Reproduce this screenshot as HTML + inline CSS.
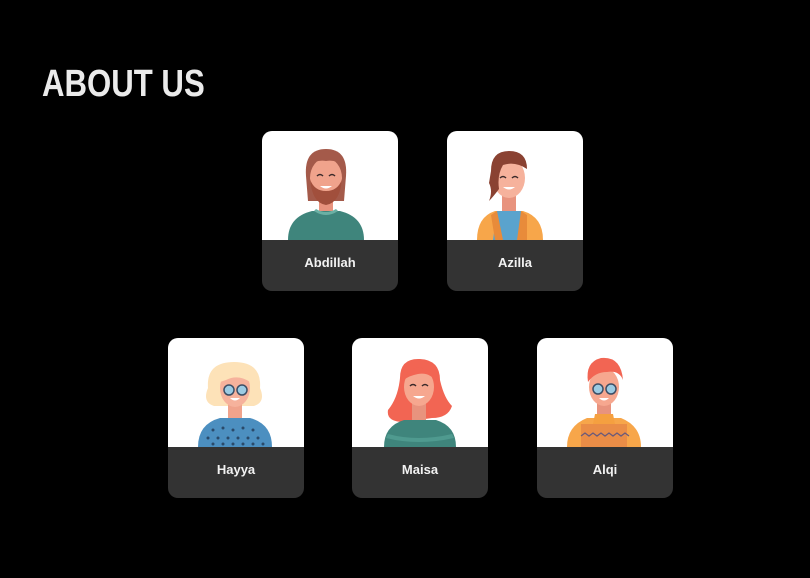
<!DOCTYPE html>
<html><head><meta charset="utf-8"><style>
body{margin:0;width:810px;height:578px;background:#000;position:relative;overflow:hidden;font-family:"Liberation Sans",sans-serif}
h1{position:absolute;left:42px;top:62px;margin:0;font-size:38px;line-height:44px;color:#ebebeb;font-weight:bold;transform:scaleX(0.82);transform-origin:left top;white-space:nowrap}
.card{position:absolute;width:136px;height:160px;border-radius:10px;overflow:hidden;background:#333}
.card svg{display:block;width:136px;height:109px;background:#fff}
.card div{height:51px;line-height:46px;text-align:center;color:#f2f2f2;font-weight:bold;font-size:13px}
</style></head><body>
<h1>ABOUT US</h1>

<div class="card" style="left:262px;top:131px">
<svg viewBox="0 0 136 109">
<path d="M44 45 Q42 18 64 18 Q86 18 84 45 L82 70 L46 70Z" fill="#a45a4a"/>
<rect x="57" y="60" width="14" height="24" fill="#e8937e"/>
<path d="M26 109 Q26 86 50 80 L78 80 Q102 86 102 109Z" fill="#3f857c"/>
<path d="M52 80 Q64 88 76 80 L74 78 Q64 84 54 78Z" fill="#6bb0a4"/>
<ellipse cx="64" cy="47" rx="16" ry="20" fill="#f0a38c"/>
<path d="M48 48 Q50 72 64 74 Q78 72 80 48 Q76 60 64 60 Q52 60 48 48Z" fill="#a14f3c"/>
<path d="M46 36 Q48 20 64 21 Q80 20 82 36 Q74 28 64 30 Q54 28 46 36Z" fill="#a45a4a"/>
<path d="M55 45 q3-3 6 0 M67 45 q3-3 6 0" stroke="#3a2a2a" stroke-width="1.5" fill="none"/>
<path d="M58 55 Q64 60 70 55Z" fill="#fff"/>
</svg><div>Abdillah</div></div>

<div class="card" style="left:447px;top:131px">
<svg viewBox="0 0 136 109">
<rect x="55" y="60" width="14" height="24" fill="#e8937e"/>
<path d="M30 109 Q30 86 48 80 L76 80 Q96 86 96 109Z" fill="#f7a64a"/>
<path d="M50 80 L74 80 L80 109 L46 109Z" fill="#5aa3cd"/>
<path d="M44 84 L50 80 L56 109 L48 109Z M80 84 L74 80 L70 109 L80 109Z" fill="#e88b3a"/>
<ellipse cx="62" cy="47" rx="16" ry="20" fill="#f6b29c"/>
<path d="M44 40 Q44 20 62 20 Q80 20 80 38 Q68 30 56 34 Q50 44 52 58 Q46 66 42 70 Q46 60 42 52Z" fill="#8a4232"/>
<path d="M53 47 q3-3 6 0 M65 47 q3-3 6 0" stroke="#3a2a2a" stroke-width="1.5" fill="none"/>
<path d="M56 56 Q62 61 68 56Z" fill="#fff"/>
</svg><div>Azilla</div></div>

<div class="card" style="left:168px;top:338px">
<svg viewBox="0 0 136 109">
<path d="M40 50 Q38 24 66 24 Q94 24 92 50 Q98 64 86 68 L46 68 Q34 64 40 50Z" fill="#fde2b8"/>
<rect x="60" y="60" width="14" height="24" fill="#f0a38c"/>
<path d="M30 109 Q30 86 52 80 L82 80 Q104 86 104 109Z" fill="#4c8fc0"/>
<g fill="#2a4a6a"><circle cx="45" cy="92" r="1.5"/><circle cx="55" cy="90" r="1.5"/><circle cx="65" cy="92" r="1.5"/><circle cx="75" cy="90" r="1.5"/><circle cx="85" cy="92" r="1.5"/><circle cx="40" cy="100" r="1.5"/><circle cx="50" cy="100" r="1.5"/><circle cx="60" cy="100" r="1.5"/><circle cx="70" cy="100" r="1.5"/><circle cx="80" cy="100" r="1.5"/><circle cx="90" cy="100" r="1.5"/><circle cx="45" cy="106" r="1.5"/><circle cx="55" cy="106" r="1.5"/><circle cx="65" cy="106" r="1.5"/><circle cx="75" cy="106" r="1.5"/><circle cx="85" cy="106" r="1.5"/><circle cx="95" cy="106" r="1.5"/></g>
<ellipse cx="67" cy="50" rx="15" ry="19" fill="#f6b29c"/>
<path d="M52 44 Q54 28 68 30 Q82 30 82 44 Q70 36 58 42Z" fill="#fde2b8"/>
<circle cx="61" cy="52" r="5" fill="#9ccbe3" stroke="#3d4f66" stroke-width="1.5"/><circle cx="74" cy="52" r="5" fill="#9ccbe3" stroke="#3d4f66" stroke-width="1.5"/>
<path d="M62 60 Q67 65 72 60Z" fill="#fff"/>
</svg><div>Hayya</div></div>

<div class="card" style="left:352px;top:338px">
<svg viewBox="0 0 136 109">
<path d="M48 40 Q48 20 68 21 Q88 22 88 42 Q92 60 100 68 Q96 80 80 80 L52 84 Q34 84 36 72 Q46 60 48 40Z" fill="#f26553"/>
<rect x="60" y="60" width="14" height="24" fill="#e8937e"/>
<path d="M32 109 Q32 88 52 82 L84 82 Q104 88 104 109Z" fill="#3f857c"/>
<path d="M36 96 Q66 104 100 96 L102 100 Q66 108 34 100Z" fill="#4f9a8f"/>
<ellipse cx="67" cy="49" rx="15" ry="19" fill="#f6a78f"/>
<path d="M52 42 Q56 28 70 30 Q82 32 84 44 Q78 34 66 36 Q56 38 52 42Z" fill="#f26553"/>
<path d="M58 48 q3-3 6 0 M70 48 q3-3 6 0" stroke="#3a2a2a" stroke-width="1.5" fill="none"/>
<path d="M61 58 Q67 63 73 58Z" fill="#fff"/>
</svg><div>Maisa</div></div>

<div class="card" style="left:537px;top:338px">
<svg viewBox="0 0 136 109">
<rect x="60" y="60" width="14" height="24" fill="#e8937e"/>
<path d="M30 109 Q30 88 50 80 L84 80 Q104 88 104 109Z" fill="#f7a64a"/>
<path d="M44 86 L90 86 L90 109 L44 109Z" fill="#ea8d47"/>
<path d="M58 76 L76 76 L78 86 L56 86Z" fill="#f5a040"/>
<path d="M44 98 l4-3 4 3 4-3 4 3 4-3 4 3 4-3 4 3 4-3 4 3 4-3 4 3" stroke="#6a5a7a" stroke-width="1.3" fill="none"/>
<ellipse cx="67" cy="49" rx="15" ry="19" fill="#f6a78f"/>
<path d="M51 44 Q48 24 64 20 Q84 18 86 42 Q82 32 70 34 Q58 34 51 44Z" fill="#f26553"/>
<circle cx="61" cy="51" r="5" fill="#9ccbe3" stroke="#3d4f66" stroke-width="1.5"/><circle cx="74" cy="51" r="5" fill="#9ccbe3" stroke="#3d4f66" stroke-width="1.5"/>
<path d="M62 60 Q67 65 72 60Z" fill="#fff"/>
</svg><div>Alqi</div></div>
</body></html>
